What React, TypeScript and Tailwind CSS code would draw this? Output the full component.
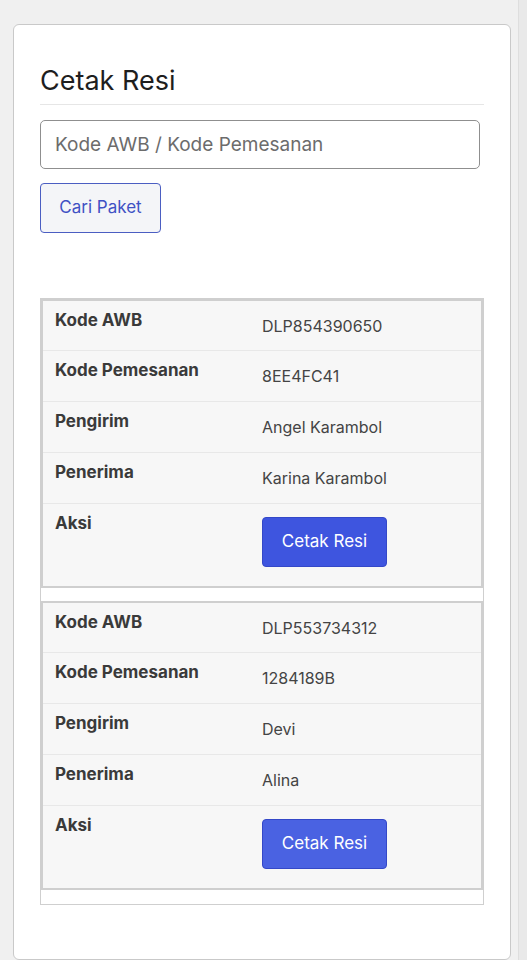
import React from "react";

type Paket = {
  awb: string;
  kode: string;
  pengirim: string;
  penerima: string;
  btn: string;
};

const data: Paket[] = [
  { awb: "DLP854390650", kode: "8EE4FC41", pengirim: "Angel Karambol", penerima: "Karina Karambol", btn: "bg-[#3e55df]" },
  { awb: "DLP553734312", kode: "1284189B", pengirim: "Devi", penerima: "Alina", btn: "bg-[#4a62e2]" },
];

function Row({ label, value, first }: { label: string; value: string; first?: boolean }) {
  return (
    <div
      className={`grid grid-cols-[207px_1fr] border-b border-[#e8e8e8] ${first ? "h-[50px]" : "h-[51px]"}`}
    >
      <div className="px-3 pt-[7px] text-[17px] leading-6 font-bold text-[#3a3a3a]">{label}</div>
      <div className="px-3 pt-[13px] text-[16px] leading-6 text-[#444]">{value}</div>
    </div>
  );
}

function Record({ p }: { p: Paket }) {
  return (
    <div className="border-2 border-[#cfcfcf] bg-[#f7f7f7]">
      <Row label="Kode AWB" value={p.awb} first />
      <Row label="Kode Pemesanan" value={p.kode} />
      <Row label="Pengirim" value={p.pengirim} />
      <Row label="Penerima" value={p.penerima} />
      <div className="grid grid-cols-[207px_1fr] h-[82px]">
        <div className="px-3 pt-[7px] text-[17px] leading-6 font-bold text-[#3a3a3a]">Aksi</div>
        <div className="px-3 pt-[13px]">
          <button
            className={`${p.btn} w-[125px] h-[50px] rounded-[4px] border border-[#3448c8] text-white text-[17px]`}
          >
            Cetak Resi
          </button>
        </div>
      </div>
    </div>
  );
}

export default function App() {
  return (
    <div
      className="h-[960px] bg-[#f0f0f0] flex overflow-hidden"
      style={{ fontFamily: "Inter, 'Noto Sans', sans-serif" }}
    >
      <div className="w-[518px] pl-[13px] pr-[7px] pt-[24px]">
        <div className="h-[936px] bg-white border border-[#c9c9c9] rounded-[6px] px-[26px] pt-[38px]">
          <h1 className="text-[27px] leading-9 text-[#1e1e1e] pb-[5px] border-b border-[#e6e6e6]">
            Cetak Resi
          </h1>
          <input
            className="mt-[15px] w-[440px] h-[49px] border border-[#8f8f8f] rounded-[5px] px-[14px] text-[19px] placeholder:text-[#6c6c6c] outline-none"
            placeholder="Kode AWB / Kode Pemesanan"
          />
          <button className="mt-[14px] block w-[121px] h-[50px] border border-[#4b5ec2] rounded-[4px] bg-[#f4f5f8] text-[#3f51c4] text-[17px]">
            Cari Paket
          </button>
          <div className="mt-[65px] border border-[#cfcfcf] flex flex-col gap-[13px] pb-[14px]">
            {data.map((p) => (
              <Record key={p.awb} p={p} />
            ))}
          </div>
        </div>
      </div>
      <div className="w-[9px] bg-[#e9e9e9] border-l border-[#dedede]" />
    </div>
  );
}
